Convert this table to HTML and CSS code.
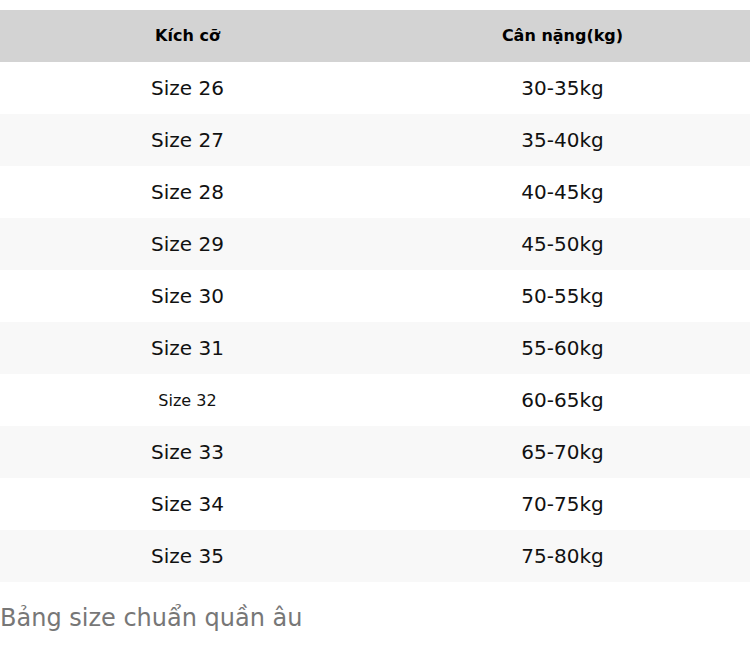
FILE: index.html
```html
<!DOCTYPE html>
<html lang="vi">
<head>
<meta charset="utf-8">
<title>Bảng size</title>
<link rel="stylesheet" href="styles.css">
</head>
<body>
<div class="wrap">
<table class="size-table">
<thead>
<tr><th>Kích cỡ</th><th>Cân nặng(kg)</th></tr>
</thead>
<tbody>
<tr><td>Size 26</td><td>30-35kg</td></tr>
<tr><td>Size 27</td><td>35-40kg</td></tr>
<tr><td>Size 28</td><td>40-45kg</td></tr>
<tr><td>Size 29</td><td>45-50kg</td></tr>
<tr><td>Size 30</td><td>50-55kg</td></tr>
<tr><td>Size 31</td><td>55-60kg</td></tr>
<tr><td class="small">Size 32</td><td>60-65kg</td></tr>
<tr><td>Size 33</td><td>65-70kg</td></tr>
<tr><td>Size 34</td><td>70-75kg</td></tr>
<tr><td>Size 35</td><td>75-80kg</td></tr>
</tbody>
</table>
<p class="caption">Bảng size chuẩn quần âu</p>
</div>
</body>
</html>
```
FILE: styles.css
```css
html, body {
  margin: 0;
  padding: 0;
  background: #fff;
}
body {
  font-family: "DejaVu Sans", sans-serif;
  color: #111;
}
.wrap {
  padding-top: 10px;
}
.size-table {
  width: 100%;
  border-collapse: collapse;
  table-layout: fixed;
}
.size-table th {
  background: #d3d3d3;
  height: 50px;
  padding: 0 0 2px;
  font-size: 16px;
  font-weight: bold;
  text-align: center;
  color: #000;
}
.size-table td {
  height: 52px;
  padding: 0;
  font-size: 20px;
  text-align: center;
}
.size-table td.small {
  font-size: 16px;
}
.size-table tbody tr:nth-child(even) td {
  background: #f8f8f8;
}
.caption {
  margin: 22px 0 0;
  font-size: 24px;
  color: #777;
}
```
